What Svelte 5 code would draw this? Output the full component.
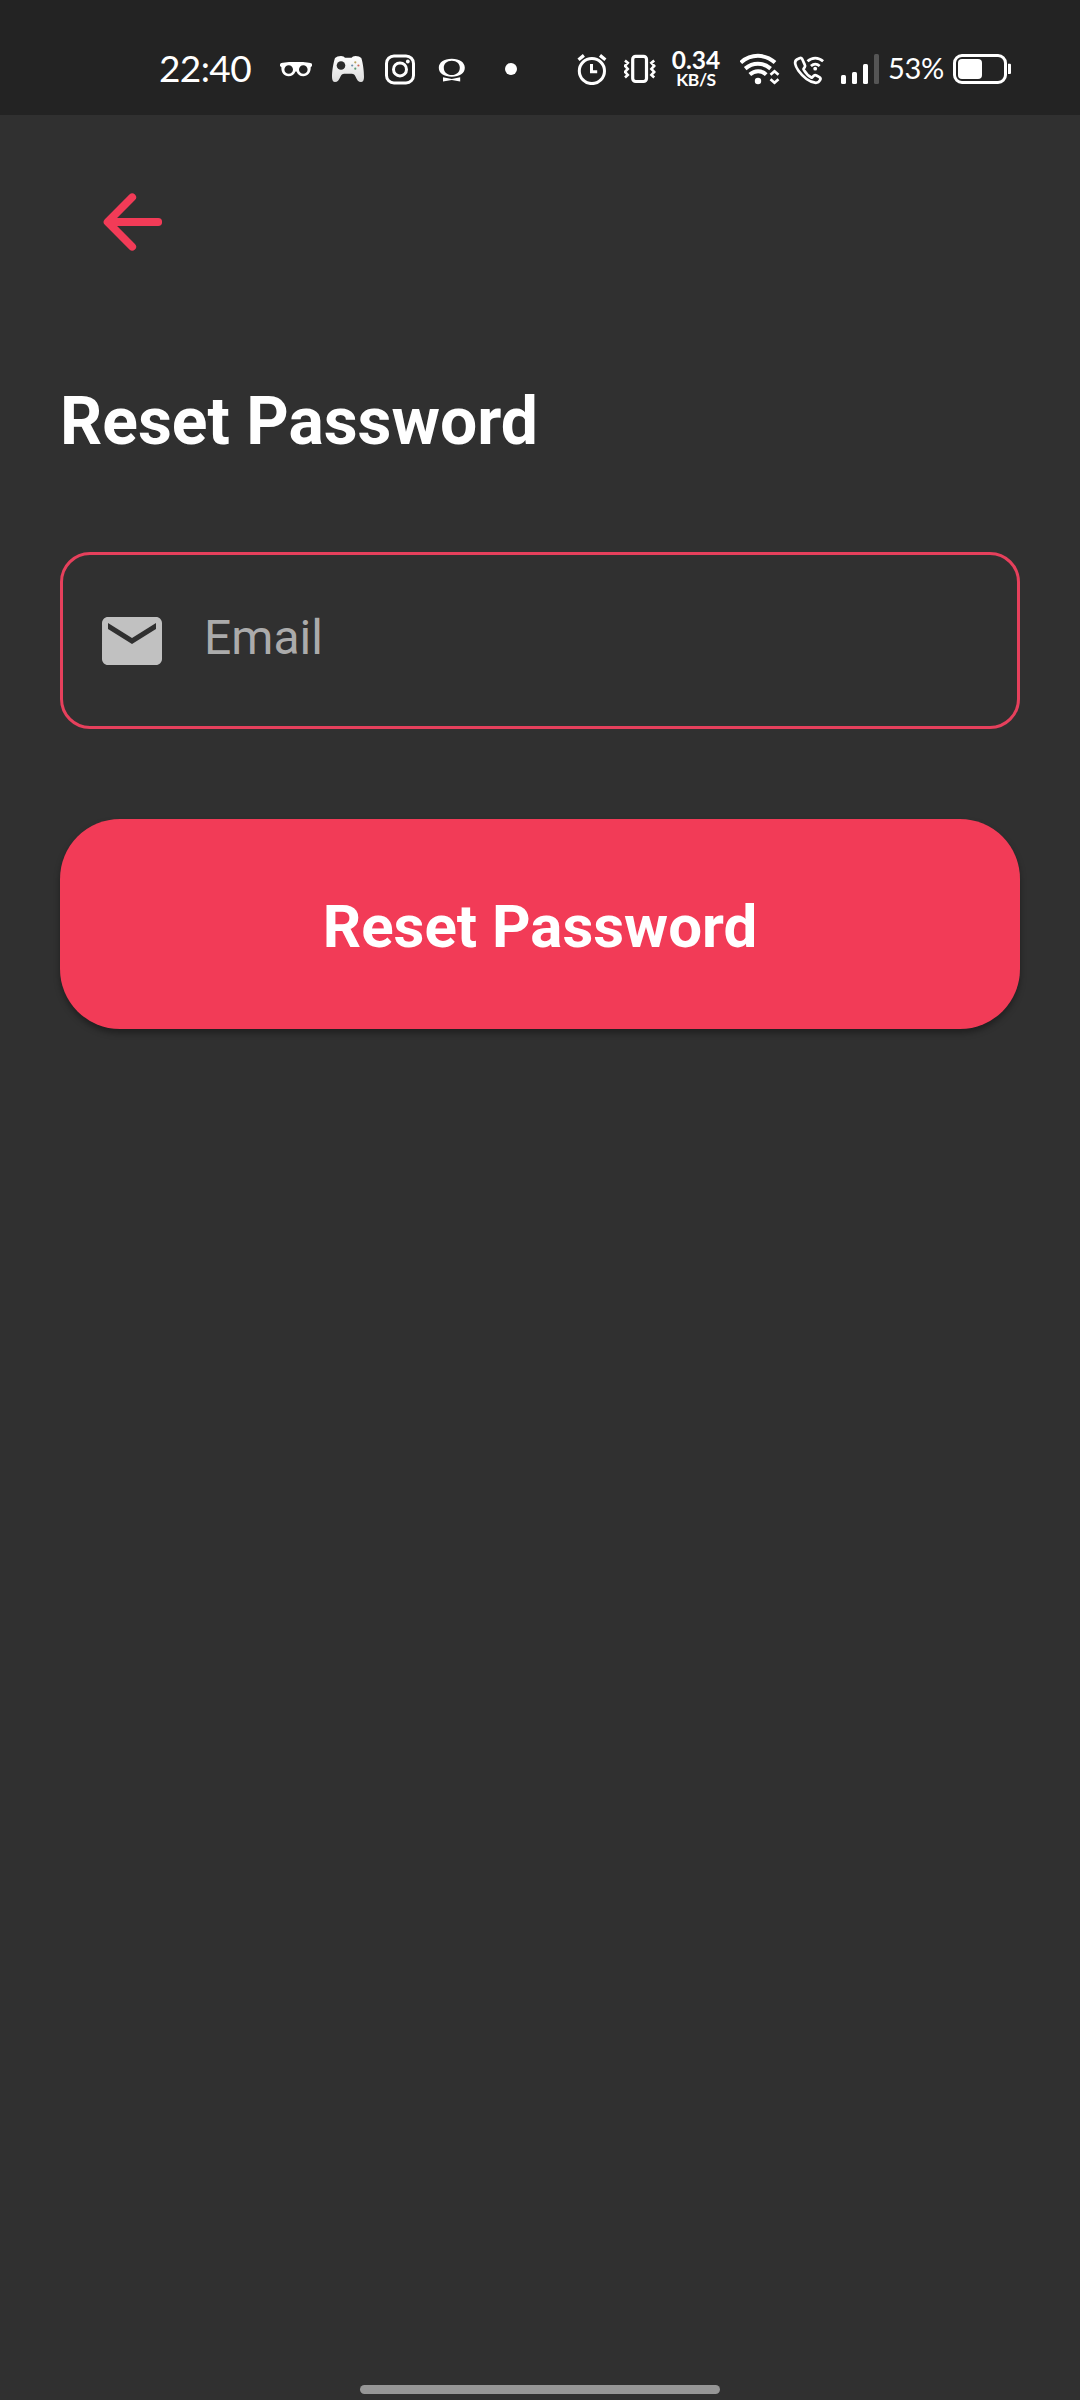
<script lang="ts">
  let email = $state('');
</script>

<div class="screen">
  <header class="status">
    <div class="left">
      <span class="time">22:40</span>
      <svg class="goggles" width="32" height="32" viewBox="280 53 32 32">
        <path fill="#fff" fill-rule="evenodd" d="M280 64.500q0-1.800 3-1.700l6-.7h14l6 .7q3 0 3 1.700v1.500l-1.300 1.200c.2 5.500-3 9-7.300 9-3.600 0-5.700-2-6.900-4.800h-1c-1.200 2.800-3.500 4.800-7 4.800-4.500 0-7.400-3.500-7.100-9L280 66zM288.700 65.200a4.300 4.300 0 1 0 0 8.600 4.300 4.300 0 1 0 0-8.600zM303.300 65.200a4.300 4.300 0 1 0 0 8.600 4.300 4.300 0 1 0 0-8.600z" />
      </svg>
      <svg class="gamepad" width="32" height="32" viewBox="332 53 32 32">
        <defs>
          <linearGradient id="pad" x1="0" y1="0" x2="0" y2="1">
            <stop offset="0" stop-color="#fff" /><stop offset="1" stop-color="#dcdcdc" />
          </linearGradient>
        </defs>
        <path fill="url(#pad)" d="M335 58q2-2 6-2 3 0 4 1.800h6.500Q352.500 56 355.500 56q4 0 5.800 2c1.700 5 2.700 13 2.700 19 0 3-1 5-3 5-2.600 0-4-2-5.300-5-.9-2-2-3.200-4-3.200h-7.400c-2 0-3 1.200-4 3.200-1.400 3-2.700 5-5.300 5-2 0-3-2-3-5 0-6 1.300-14 3-19z" />
        <circle cx="341" cy="65.500" r="4.300" fill="#2c2c2c" />
        <circle cx="355.300" cy="62.300" r="1.100" fill="#b9a25e" />
        <circle cx="352.200" cy="65.500" r="1.100" fill="#6b8ba8" />
        <circle cx="358.400" cy="65.500" r="1.100" fill="#c9685c" />
        <circle cx="355.300" cy="68.700" r="1.100" fill="#5b9a76" />
      </svg>
      <svg class="camera" width="30" height="32" viewBox="385 53 30 32">
        <g fill="none" stroke="#fff" stroke-width="3">
          <rect x="386.500" y="55.900" width="27" height="27" rx="7.500" />
          <circle cx="400" cy="69.400" r="6.500" />
        </g>
        <circle cx="407.800" cy="61.500" r="1.900" fill="#fff" />
      </svg>
      <svg class="ring" width="28" height="32" viewBox="438 53 28 32">
        <path fill="#fff" fill-rule="evenodd" d="M451.800 58.700c8 0 13 3.800 13 9 0 5.400-5 9-13 9s-13-3.600-13-9c0-5.200 5-9 13-9zm0 2c-5 0-8 3-8 7 0 4.300 3.200 7.300 8 7.300s8-3 8-7.300c0-4-3-7-8-7z" />
        <path fill="#fff" d="M443 77.300l8.800 1.700 8.400-1.700v4.200l-8.400-1.600-8.800 1.600z" />
      </svg>
      <span class="dot"></span>
    </div>

    <div class="right">
      <svg width="30" height="32" viewBox="577 53 30 32">
        <g fill="none" stroke="#fff" stroke-width="3">
          <circle cx="591.900" cy="71" r="12.600" />
          <path d="M591.500 64v7.800h5.700" />
          <path stroke-width="3.300" d="M578.500 59.700l5.400-4.300M600 55.400l5.400 4.300" />
        </g>
      </svg>
      <svg class="vibrate" width="32" height="32" viewBox="624 53 32 32">
        <g fill="none" stroke="#fff" stroke-width="3.200">
          <rect x="632.700" y="56.300" width="13.800" height="25.200" rx="3" />
          <path stroke-width="2.600" d="M625 60.500l2.800 2.400-2.800 3 2.800 3-2.800 3 2.800 3-2.800 2.600M654.200 60.500l-2.800 2.400 2.800 3-2.800 3 2.800 3-2.800 3 2.800 2.600" />
        </g>
      </svg>
      <div class="speed"><span class="rate">0.34</span><span class="unit">KB/S</span></div>
      <svg class="wifi" width="40" height="32" viewBox="740 53 40 32">
        <g fill="none" stroke="#fff" stroke-width="4">
          <path d="M740.800 62.600c10-9 24.200-9 34.200 0" />
          <path d="M745.200 68.600c7.800-6.600 17.600-6.600 25.400 0" />
          <path d="M749.800 74.600c5-4.400 11.600-4.400 16.400 0" />
          <path stroke-width="2.600" d="M770.500 74.800l4-3.600 4 3.600M770.500 79.200l4 3.600 4-3.600" />
        </g>
        <circle cx="758" cy="81" r="3.200" fill="#fff" />
      </svg>
      <svg class="call" width="32" height="32" viewBox="793 53 32 32">
        <g fill="none" stroke="#fff" stroke-width="2.700" stroke-linejoin="round">
          <path d="M799.500 58.200l-2.600 1.300c-3 1.700-2 6.200 1.600 11.200 4.500 6.200 11 11 16.500 12 2.400.4 4-.7 5.200-2.800.7-1.200.2-2-.8-2.700l-3-1.700c-1-.5-1.800-.4-2.600.3l-2 1.900c-3-1.500-6-4.400-7.800-7.600l-.5-1 1.300-2c.5-.8.500-1.300 0-2.200l-2.500-5.700c-.7-1.200-1.600-1.500-2.800-1z" />
          <path d="M807.500 61.300c4.600-4.200 11-4.200 15.600 0" />
          <path d="M810.900 66c2.700-2.400 6.100-2.400 8.800 0" />
        </g>
        <circle cx="815.200" cy="68.700" r="1.900" fill="#fff" />
      </svg>
      <svg class="signal" width="38" height="32" viewBox="841 53 38 32">
        <g fill="#fff">
          <rect x="841" y="75" width="5" height="9" rx="1.500" />
          <rect x="852" y="72" width="5" height="12" rx="1.500" />
          <rect x="863" y="64" width="5" height="20" rx="1.500" />
        </g>
        <rect x="874" y="54" width="5" height="30" rx="1.500" fill="#555" />
      </svg>
      <span class="percent">53%</span>
      <svg class="battery" width="59" height="32" viewBox="953 53 59 32">
        <rect x="954.500" y="55.500" width="51" height="27" rx="7.500" fill="none" stroke="#fff" stroke-width="3" />
        <rect x="958" y="59" width="24" height="20" rx="4" fill="#fff" />
        <path fill="#fff" d="M1008 63.700h2q1 0 1 1v8.300q0 1-1 1h-2z" />
      </svg>
    </div>
  </header>

  <main>
    <button class="back" aria-label="Back">
      <svg width="72" height="72" viewBox="96 186 72 72" fill="none" stroke="#f23b57" stroke-width="7.800" stroke-linecap="round" stroke-linejoin="round">
        <path d="M132.200 197.300L107.600 222l24.600 24.700M108.500 222h49.700" />
      </svg>
    </button>
    <h1>Reset Password</h1>
    <label class="field">
      <svg width="72" height="72" viewBox="0 0 24 24" fill="#c1c1c1">
        <path d="M20 4H4c-1.100 0-1.990.9-1.990 2L2 18c0 1.100.9 2 2 2h16c1.100 0 2-.9 2-2V6c0-1.100-.9-2-2-2zm0 4l-8 5-8-5V6l8 5 8-5v2z" />
      </svg>
      <input type="email" placeholder="Email" bind:value={email} />
    </label>
    <button class="submit">Reset Password</button>
  </main>

  <div class="home"></div>
</div>

<style>
  :global(body) { background: #303030; }
  .screen {
    width: 1080px;
    height: 2400px;
    display: flex;
    flex-direction: column;
    background: #303030;
    color: #fff;
    font-family: Roboto, sans-serif;
  }
  svg { display: block; flex: none; }
  .status {
    height: 115px;
    box-sizing: border-box;
    padding: 23px 68px 0 159px;
    display: flex;
    justify-content: space-between;
    align-items: center;
    background: #232323;
    font-family: Lato, "Open Sans", sans-serif;
    white-space: nowrap;
  }
  .left, .right { display: flex; align-items: center; height: 32px; }
  .time { width: 121px; padding-bottom: 2px; font-size: 37px; line-height: 32px; letter-spacing: -0.6px; }
  .gamepad { margin-left: 20px; }
  .camera { margin-left: 21px; }
  .ring { margin-left: 23px; }
  .dot { width: 12px; height: 12px; margin-left: 39px; border-radius: 50%; background: #fff; }
  .vibrate { margin-left: 17px; }
  .speed {
    width: 58px;
    margin-left: 11px;
    display: flex;
    flex-direction: column;
    align-items: center;
    font-weight: 700;
  }
  .rate { font-size: 24.500px; line-height: 20px; }
  .unit { font-size: 17.500px; line-height: 19px; letter-spacing: -0.5px; }
  .wifi { margin-left: 15px; }
  .call { margin-left: 13px; }
  .signal { margin-left: 16px; }
  .percent { width: 65px; margin-left: 9px; padding-bottom: 3px; font-size: 29px; line-height: 32px; letter-spacing: -0.3px; }

  main { flex: 1; display: flex; flex-direction: column; padding: 71px 60px 0; }
  button { border: 0; padding: 0; font-family: inherit; color: inherit; }
  .back { width: 72px; height: 72px; margin-left: 36px; background: none; }
  h1 { margin: 125px 0 0; font-size: 66px; line-height: 78px; font-weight: 700; }
  .field {
    height: 177px;
    box-sizing: border-box;
    margin-top: 91px;
    padding: 0 33px;
    display: flex;
    align-items: center;
    gap: 36px;
    border: 3px solid #e6405c;
    border-radius: 30px;
  }
  input {
    flex: 1;
    height: 60px;
    margin-bottom: 6px;
    padding: 0;
    border: 0;
    outline: 0;
    background: none;
    color: #fff;
    font-family: inherit;
    font-size: 48px;
  }
  input::placeholder { color: #ababab; opacity: 1; }
  .submit {
    height: 210px;
    margin-top: 90px;
    padding-top: 4px;
    border-radius: 60px;
    background: #f23b57;
    box-shadow: 0 4px 6px rgba(0, 0, 0, 0.35);
    font-size: 60px;
    font-weight: 700;
  }
  .home { width: 360px; height: 9px; margin: 0 auto 6px; border-radius: 5px; background: #969696; }
</style>
